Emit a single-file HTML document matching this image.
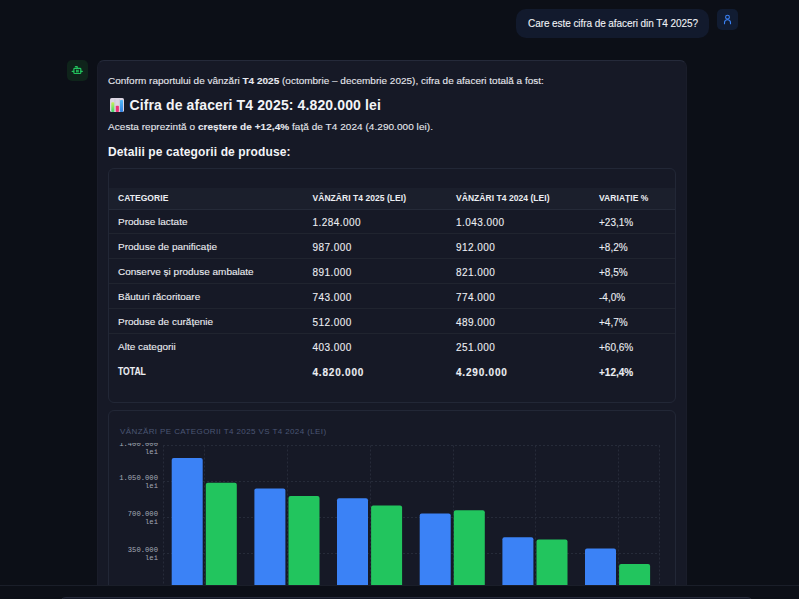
<!DOCTYPE html>
<html><head><meta charset="utf-8">
<style>
*{margin:0;padding:0;box-sizing:border-box}
html,body{width:799px;height:599px;overflow:hidden;background:#0c0f17;font-family:"Liberation Sans",sans-serif;color:#e6e8ee}
.a{position:absolute;white-space:nowrap}
#bubble{left:516px;top:9px;width:193px;height:29px;background:#121a2d;border-radius:10px}
#uav{left:717px;top:9px;width:21px;height:21px;background:#111c32;border-radius:5px}
#bav{left:67px;top:60px;width:21px;height:21px;background:#0f241b;border-radius:5px}
#card{left:97px;top:60px;width:590px;height:600px;background:#161926;border:1px solid #1a1d2a;border-top-color:#252a3a;border-radius:7px}
.t{font-size:10px;line-height:12px;transform-origin:0 9.5px;transform:scaleY(.94);-webkit-text-stroke:.1px currentColor}
#tbox{left:108px;top:168px;width:568px;height:235px;border:1px solid #222736;border-radius:6px}
#thead{left:109px;top:188px;width:566px;height:22px;background:#1b1f2c;border-bottom:1px solid #252a38}
.rl{left:109px;width:566px;height:1px;background:#20242f}
.th{font-size:8.5px;font-weight:bold;color:#eceef2;line-height:10px;letter-spacing:.05px}
.td{font-size:10px;color:#eceef2;line-height:12px;transform-origin:0 9.5px;transform:scaleY(.94);-webkit-text-stroke:.1px currentColor}
.n{letter-spacing:.45px;transform:translateY(.8px)}
.n2{transform:translateY(.8px)}
.c1{left:118px}.c2{left:312.5px}.c3{left:456px}.c4{left:599px}
#cbox{left:108px;top:410px;width:568px;height:300px;border:1px solid #222736;border-radius:6px}
#foot{left:0;top:585px;width:799px;height:14px;background:#0c0f17;border-top:1px solid #1a1e29}
#inp{left:59px;top:597px;width:694.5px;height:40px;background:#161a27;border:1px solid #262a39;border-radius:7px}
.yl{font-family:"Liberation Mono",monospace;font-size:7.2px;line-height:7.5px;color:#a4aab6;text-align:right;width:60px;left:98px}
</style></head>
<body>
<div class="a" id="bubble"></div>
<div class="a t" style="left:528px;top:18.2px;color:#f0f2f6;letter-spacing:-.07px;transform:none">Care este cifra de afaceri din T4 2025?</div>
<div class="a" id="uav">
<svg style="position:absolute;left:0;top:0" width="21" height="21" viewBox="0 0 21 21" fill="none" stroke="#3b82f6" stroke-width="1.1" stroke-linecap="round"><circle cx="10.5" cy="8.2" r="1.9"/><path d="M7.5 14.7V13.8A3 3 0 0 1 13.5 13.8V14.7"/></svg>
</div>
<div class="a" id="bav">
<svg style="position:absolute;left:0;top:0" width="21" height="21" viewBox="0 0 21 21" fill="none" stroke="#22c55e" stroke-width="1.2" stroke-linecap="round" stroke-linejoin="round"><path d="M10.2 8.3V6.7H8.4"/><rect x="6.9" y="8.3" width="6.9" height="5.2" rx=".8"/><path d="M5.2 11.4h1.4M13.9 11.4h1.4M9.7 10v2M11.1 10v2"/></svg>
</div>
<div class="a" id="card"></div>

<div class="a t" style="left:108px;top:74.5px">Conform raportului de vânzări <b>T4 2025</b> (octombrie – decembrie 2025), cifra de afaceri totală a fost:</div>
<svg class="a" style="left:110px;top:98px" width="14" height="14" viewBox="0 0 14 14"><defs><linearGradient id="gg" x1="0" y1="0" x2="0" y2="1"><stop offset="0" stop-color="#c8f35a"/><stop offset="1" stop-color="#3ed46a"/></linearGradient><linearGradient id="bg2" x1="0" y1="0" x2="0" y2="1"><stop offset="0" stop-color="#52b8f7"/><stop offset="1" stop-color="#2f7fe0"/></linearGradient></defs><rect x="0" y="0" width="14" height="14" rx="1.6" fill="#dcd6e4"/><path d="M4.9 1v13M9.4 1v13" stroke="#c4bfcc" stroke-width=".5"/><rect x="1.3" y="4.2" width="3" height="9.8" rx=".8" fill="url(#gg)"/><rect x="5.8" y="7.8" width="3.1" height="6.2" rx=".8" fill="#ec3275"/><rect x="10" y="2" width="3" height="12" rx=".8" fill="url(#bg2)"/></svg>
<div class="a" style="left:129.5px;top:97.3px;font-size:14px;line-height:16px;font-weight:bold;color:#f3f4f7;letter-spacing:.12px">Cifra de afaceri T4 2025: 4.820.000 lei</div>
<div class="a t" style="left:108px;top:121.2px;letter-spacing:.05px">Acesta reprezintă o <b>creștere de +12,4%</b> față de T4 2024 (4.290.000 lei).</div>
<div class="a" style="left:108px;top:144.5px;font-size:12px;line-height:14px;font-weight:bold;color:#f3f4f7;letter-spacing:.125px">Detalii pe categorii de produse:</div>

<div class="a" id="tbox"></div>
<div class="a" id="thead"></div>
<div class="a rl" style="top:233px"></div>
<div class="a rl" style="top:258px"></div>
<div class="a rl" style="top:283px"></div>
<div class="a rl" style="top:308px"></div>
<div class="a rl" style="top:333px"></div>

<div class="a th c1" style="top:192.5px">CATEGORIE</div>
<div class="a th c2" style="top:192.5px">VÂNZĂRI T4 2025 (LEI)</div>
<div class="a th c3" style="top:192.5px">VÂNZĂRI T4 2024 (LEI)</div>
<div class="a th c4" style="top:192.5px">VARIAȚIE %</div>

<div class="a td c1" style="top:216px">Produse lactate</div>
<div class="a td n c2" style="top:216px">1.284.000</div>
<div class="a td n c3" style="top:216px">1.043.000</div>
<div class="a td n2 c4" style="top:216px">+23,1%</div>

<div class="a td c1" style="top:241px">Produse de panificație</div>
<div class="a td n c2" style="top:241px">987.000</div>
<div class="a td n c3" style="top:241px">912.000</div>
<div class="a td n2 c4" style="top:241px">+8,2%</div>

<div class="a td c1" style="top:266px">Conserve și produse ambalate</div>
<div class="a td n c2" style="top:266px">891.000</div>
<div class="a td n c3" style="top:266px">821.000</div>
<div class="a td n2 c4" style="top:266px">+8,5%</div>

<div class="a td c1" style="top:291px">Băuturi răcoritoare</div>
<div class="a td n c2" style="top:291px">743.000</div>
<div class="a td n c3" style="top:291px">774.000</div>
<div class="a td n2 c4" style="top:291px">-4,0%</div>

<div class="a td c1" style="top:316px">Produse de curățenie</div>
<div class="a td n c2" style="top:316px">512.000</div>
<div class="a td n c3" style="top:316px">489.000</div>
<div class="a td n2 c4" style="top:316px">+4,7%</div>

<div class="a td c1" style="top:340.5px">Alte categorii</div>
<div class="a td n c2" style="top:340.5px">403.000</div>
<div class="a td n c3" style="top:340.5px">251.000</div>
<div class="a td n2 c4" style="top:340.5px">+60,6%</div>

<div class="a td c1" style="top:365.5px;font-weight:bold;transform-origin:0 9.5px;transform:scale(.86,1.02)">TOTAL</div>
<div class="a td n c2" style="top:365.5px;font-weight:bold;letter-spacing:.8px">4.820.000</div>
<div class="a td n c3" style="top:365.5px;font-weight:bold;letter-spacing:.8px">4.290.000</div>
<div class="a td n2 c4" style="top:365.5px;font-weight:bold">+12,4%</div>

<div class="a" id="cbox"></div>
<div class="a" style="left:120px;top:427.3px;font-size:8px;line-height:10px;color:#4b5674;letter-spacing:.4px">VÂNZĂRI PE CATEGORII T4 2025 VS T4 2024 (LEI)</div>

<div class="a" style="left:0;top:443px;width:799px;height:142px;overflow:hidden">
<svg style="position:absolute;left:0;top:-443px" width="799" height="599" viewBox="0 0 799 599">
<g stroke="#262b39" stroke-width="1" stroke-dasharray="2 2" fill="none">
<path d="M163 445.5H660M163 481.5H660M163 517.5H660M163 553.5H660"/>
<path d="M163.5 445.5V590M204.5 445.5V590M287.5 445.5V590M370.5 445.5V590M453.5 445.5V590M535.5 445.5V590M618.5 445.5V590M659.5 445.5V590"/>
</g>
<g fill="#3b82f6">
<path d="M171.7 600V459.9a2 2 0 0 1 2 -2h27a2 2 0 0 1 2 2V600z"/>
<path d="M254.4 600V490.4a2 2 0 0 1 2 -2h27a2 2 0 0 1 2 2V600z"/>
<path d="M337.0 600V500.3a2 2 0 0 1 2 -2h27a2 2 0 0 1 2 2V600z"/>
<path d="M419.7 600V515.5a2 2 0 0 1 2 -2h27a2 2 0 0 1 2 2V600z"/>
<path d="M502.4 600V539.2a2 2 0 0 1 2 -2h27a2 2 0 0 1 2 2V600z"/>
<path d="M585.0 600V550.4a2 2 0 0 1 2 -2h27a2 2 0 0 1 2 2V600z"/>
</g>
<g fill="#22c55e">
<path d="M205.8 600V484.7a2 2 0 0 1 2 -2h27a2 2 0 0 1 2 2V600z"/>
<path d="M288.5 600V498.1a2 2 0 0 1 2 -2h27a2 2 0 0 1 2 2V600z"/>
<path d="M371.1 600V507.5a2 2 0 0 1 2 -2h27a2 2 0 0 1 2 2V600z"/>
<path d="M453.8 600V512.3a2 2 0 0 1 2 -2h27a2 2 0 0 1 2 2V600z"/>
<path d="M536.5 600V541.6a2 2 0 0 1 2 -2h27a2 2 0 0 1 2 2V600z"/>
<path d="M619.1 600V566.0a2 2 0 0 1 2 -2h27a2 2 0 0 1 2 2V600z"/>
</g>
</svg>
<div class="a yl" style="top:-2px">1.400.000<br>lei</div>
<div class="a yl" style="top:32px">1.050.000<br>lei</div>
<div class="a yl" style="top:68px">700.000<br>lei</div>
<div class="a yl" style="top:104px">350.000<br>lei</div>
</div>

<div class="a" id="foot"></div>
<div class="a" id="inp"></div>
</body></html>
